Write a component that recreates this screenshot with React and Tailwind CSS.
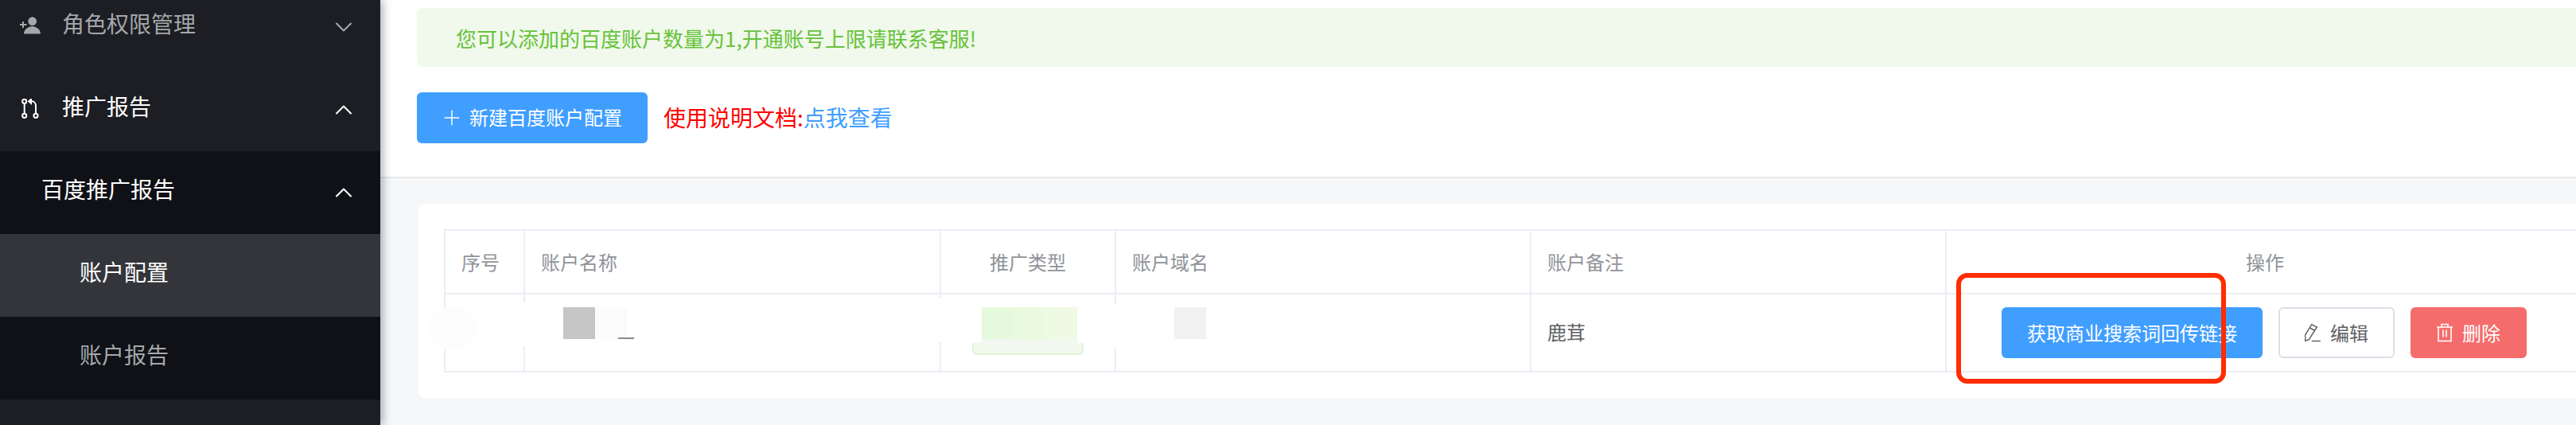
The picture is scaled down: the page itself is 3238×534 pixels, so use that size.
import React from 'react';
import { ChevronDown, ChevronUp, Plus } from 'lucide-react';

const cjk = { fontFamily: '"Noto Sans CJK SC", sans-serif' };

const PersonAddIcon = () => (
  <svg className="block w-[28px] h-[28px]" viewBox="24 20 28 28" fill="currentColor">
    <circle cx="40.7" cy="26.7" r="5.4" />
    <path d="M30 42.5c0-6 6.5-9.5 10.5-9.5s10.5 3.500 10.5 9.500z" />
    <path d="M25 30h3v-3h2v3h3.500v2H30v3h-2v-3h-3z" />
  </svg>
);

const PullIcon = () => (
  <svg className="block w-[24px] h-[28px]" viewBox="27 124 24 28" fill="none" stroke="currentColor" strokeWidth="2">
    <circle cx="30.7" cy="127.300" r="2.600" />
    <circle cx="30.700" cy="145.300" r="2.600" />
    <circle cx="45" cy="145.300" r="2.600" />
    <path d="M30.700 130v12.600" />
    <path d="M45 142.600V133c0-3-2-5.700-5-5.700h-2" />
    <path d="M40 122.500l-5.300 4.800 5.300 4.800z" fill="currentColor" stroke="none" />
  </svg>
);

const PencilIcon = () => (
  <svg className="block w-[20px] h-[24px]" viewBox="0 0 20 24" fill="none" stroke="currentColor" strokeWidth="1.5">
    <path d="M8.700 1.700L15.300 5 5.300 20.700 0.700 22.300 0.500 15z" />
    <path d="M6.700 6L13 9.500" />
    <path d="M8.700 22.500h11" />
  </svg>
);

const TrashIcon = () => (
  <svg className="block w-[20px] h-[24px]" viewBox="0 0 20 24" fill="none" stroke="currentColor" strokeWidth="1.6">
    <path d="M0 5h20M6 5V1.500h8V5M2 5v17.500h16V5M8 8.500v9M12 8.500v9" />
  </svg>
);

const menuRow = 'h-[104px] flex items-center justify-between pr-[28px] text-[28px]';

const Sidebar = () => (
  <aside className="w-[478px] shrink-0 h-full bg-[#1c1e23] relative z-10 shadow-[4px_0_10px_rgba(0,21,41,0.3)] overflow-hidden">
    <div className="-mt-[18px]">
      <div className={`${menuRow} text-[#a5a7aa]`}>
        <div className="flex items-center">
          <span className="w-[78px] pl-[24px]"><PersonAddIcon /></span>
          <span className="-mt-[10px]">角色权限管理</span>
        </div>
        <ChevronDown size={36} strokeWidth={1.4} />
      </div>
      <div className={`${menuRow} text-white`}>
        <div className="flex items-center">
          <span className="w-[78px] pl-[27px]"><PullIcon /></span>
          <span className="-mt-[10px]">推广报告</span>
        </div>
        <ChevronUp size={36} strokeWidth={1.4} />
      </div>
      <div className="bg-[#0f1116]">
        <div className={`${menuRow} text-white pl-[52px]`}>
          <span className="-mt-[10px]">百度推广报告</span>
          <ChevronUp size={36} strokeWidth={1.4} />
        </div>
        <div className={`${menuRow} text-white pl-[100px] bg-[#34353a]`}>
          <span className="-mt-[10px]">账户配置</span>
        </div>
        <div className={`${menuRow} text-[#a5a7aa] pl-[100px]`}>
          <span className="-mt-[10px]">账户报告</span>
        </div>
      </div>
    </div>
  </aside>
);

const th = 'border-2 border-[#ebeef5] px-[20px] text-[24px] font-normal text-[#909399]';
const td = 'border-2 border-[#ebeef5] px-[20px] text-[24px] text-[#606266]';

const AccountTable = () => (
  <div className="relative w-[2689px]">
    <table className="table-fixed border-collapse w-[2689px]">
      <colgroup>
        <col className="w-[100px]" />
        <col className="w-[523px]" />
        <col className="w-[220px]" />
        <col className="w-[522px]" />
        <col className="w-[522px]" />
        <col className="w-[802px]" />
      </colgroup>
      <thead>
        <tr className="h-[80px]">
          <th className={`${th} text-left`}>序号</th>
          <th className={`${th} text-left`}>账户名称</th>
          <th className={`${th} text-center`}>推广类型</th>
          <th className={`${th} text-left`}>账户域名</th>
          <th className={`${th} text-left`}>账户备注</th>
          <th className={`${th} text-center`}>操作</th>
        </tr>
      </thead>
      <tbody>
        <tr className="h-[98px]">
          <td className={td}></td>
          <td className={td}></td>
          <td className={td}></td>
          <td className={td}></td>
          <td className={td}><span className="block -mt-[2px]">鹿茸</span></td>
          <td className={td}>
            <div className="flex items-center pl-[49px] gap-[20px]">
              <button className="h-[64px] w-[328px] rounded-[6px] bg-[#409eff] text-white text-[24px]">获取商业搜索词回传链接</button>
              <button className="h-[64px] w-[146px] rounded-[6px] border-2 border-[#dcdfe6] bg-white text-[#606266] text-[24px] flex items-center justify-center gap-[12px]">
                <PencilIcon />
                编辑
              </button>
              <button className="h-[64px] w-[146px] rounded-[6px] bg-[#f56c6c] text-white text-[24px] flex items-center justify-center gap-[12px]">
                <TrashIcon />
                删除
              </button>
            </div>
          </td>
        </tr>
      </tbody>
    </table>

    {/* mosaic left over the private cells of the row */}
    <div className="absolute left-[-18px] top-[98px] w-[60px] h-[54px] rounded-full bg-[#fdfdfd]"></div>
    <div className="absolute left-[90px] top-[92px] w-[20px] h-[55px] bg-white"></div>
    <div className="absolute left-[615px] top-[87px] w-[20px] h-[54px] bg-white"></div>
    <div className="absolute left-[835px] top-[95px] w-[20px] h-[54px] bg-white"></div>
    <div className="absolute left-[150px] top-[98px] w-[40px] h-[40px] bg-[#c6c6c7]"></div>
    <div className="absolute left-[190px] top-[98px] w-[40px] h-[40px] bg-[#fbfbfc]"></div>
    <div className="absolute left-[219px] top-[136px] w-[20px] h-[2px] bg-[#8a8a8a]"></div>
    <div className="absolute left-[664px] top-[143px] w-[140px] h-[15px] rounded-b-[6px] bg-[#f0f9eb] border-b-2 border-x-2 border-[#e1f3d8]"></div>
    <div className="absolute left-[676px] top-[138px] w-[120px] h-[10px] bg-[#f2f7ef]"></div>
    <div className="absolute left-[676px] top-[98px] w-[120px] h-[40px] flex">
      <div className="flex-1 bg-[#e6f9dc]"></div>
      <div className="flex-1 bg-[#eafadf]"></div>
      <div className="flex-1 bg-[#eefae3]"></div>
    </div>
    <div className="absolute left-[918px] top-[98px] w-[40px] h-[40px] bg-[#f1f1f1]"></div>
    {/* red annotation box */}
    <div className="absolute left-[1901px] top-[55px] w-[339px] h-[139px] rounded-[14px] border-[6px] border-[#ff2d00]"></div>
  </div>
);

export default function App() {
  return (
    <div className="flex w-[3238px] h-[534px] overflow-hidden" style={cjk}>
      <Sidebar />
      <main className="flex-1 min-w-0 bg-[#f5f7f9]">
        <div className="h-[224px] bg-white border-b-2 border-[#e6e6e6] pt-[10px] pl-[46px]">
          <div className="h-[74px] rounded-l-[8px] bg-[#f0f9eb] flex items-center pl-[49px] text-[26px] text-[#67c23a]">
            您可以添加的百度账户数量为1,开通账号上限请联系客服!
          </div>
          <div className="mt-[32px] flex items-center">
            <button className="h-[64px] w-[290px] rounded-[6px] bg-[#409eff] text-white text-[24px] flex items-center justify-center gap-[7px] pr-[3px]">
              <Plus size={30} strokeWidth={1.2} />
              <span className="-mt-[2px]">新建百度账户配置</span>
            </button>
            <span className="ml-[20px] -mt-[3px] text-[28px] text-[#ff0000]">
              使用说明文档:<a className="text-[#409eff]">点我查看</a>
            </span>
          </div>
        </div>
        <div className="mt-[32px] ml-[48px] h-[244px] rounded-l-[8px] bg-white pt-[32px] pl-[32px] overflow-hidden">
          <AccountTable />
        </div>
      </main>
    </div>
  );
}
